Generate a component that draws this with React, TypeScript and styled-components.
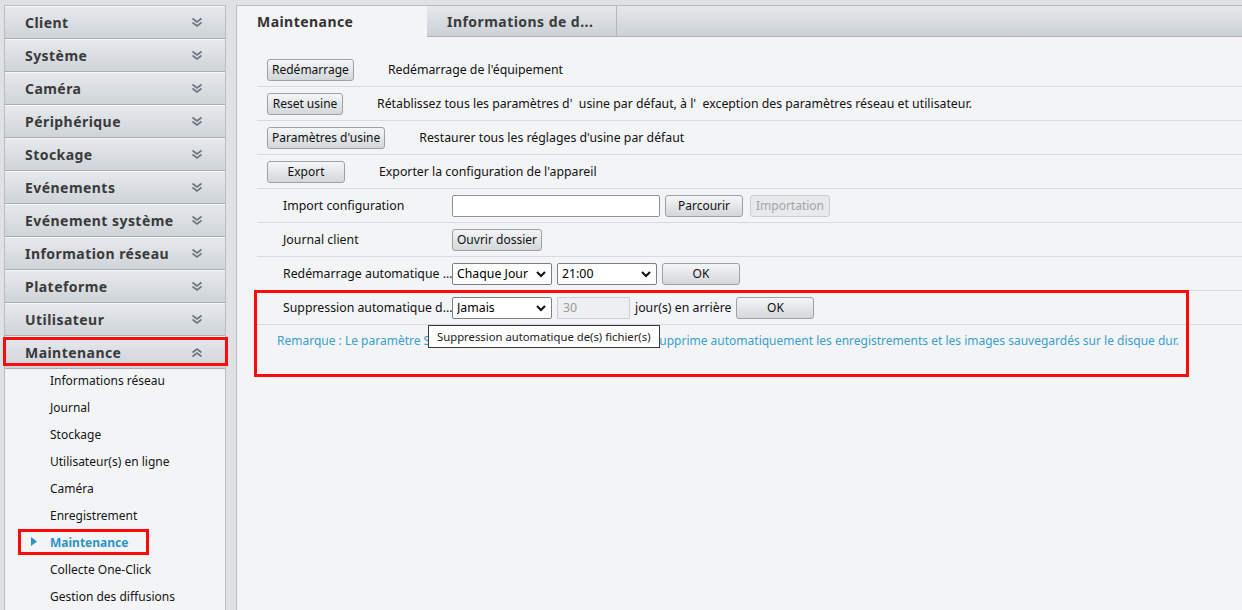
import React from "react";
import styled, { createGlobalStyle, css } from "styled-components";

const Global = createGlobalStyle`
  html, body { margin: 0; padding: 0; background: #dfe2e5; }
  body { font-family: "Noto Sans", "Open Sans", Arial, sans-serif; font-size: 12.3px; color: #111; }
  *, *::before, *::after { box-sizing: border-box; }
`;

const Page = styled.div`
  position: relative;
  display: flex;
  gap: 10px;
  padding: 5px 0 0 4px;
  height: 610px;
  overflow: hidden;
`;

const marked = css`
  &::after {
    content: "";
    position: absolute;
    border: 3px solid #ff0a0a;
    pointer-events: none;
  }
`;

const Sidebar = styled.nav`
  width: 222px;
  flex: none;
  background: #f3f4f6;
  border: 1px solid #b9bdc1;
  border-bottom: none;
  display: flex;
  flex-direction: column;
`;

const MenuHeader = styled.div<{ $marked?: boolean }>`
  position: relative;
  flex: none;
  height: 33px;
  display: flex;
  align-items: center;
  justify-content: space-between;
  padding: 0 22px 0 20px;
  background: linear-gradient(#e6e9ec, #cfd4d9);
  border-top: 1px solid #f7f8f9;
  border-bottom: 1px solid #a9aeb3;
  font-weight: 700;
  font-size: 14px;
  letter-spacing: 0.45px;
  color: #3a3a3a;
  ${(p) =>
    p.$marked &&
    css`
      ${marked}
      &::after {
        left: -2px;
        top: 0px;
        right: -3px;
        bottom: 2px;
      }
    `}
`;

const SubList = styled.div`
  display: flex;
  flex-direction: column;
  margin-top: -2px;
`;

const SubItem = styled.div<{ $active?: boolean }>`
  position: relative;
  flex: none;
  height: 27px;
  line-height: 27px;
  padding-left: 45px;
  font-size: 12px;
  color: #151515;
  ${(p) =>
    p.$active &&
    css`
      color: #2f93c8;
      font-weight: 700;
      ${marked}
      &::after {
        left: 13px;
        top: 0px;
        width: 131px;
        height: 26px;
      }
    `}
`;

const ActiveMark = styled.svg`
  position: absolute;
  left: 26px;
  top: 8px;
`;

const Main = styled.main`
  flex: 1;
  background: #f3f4f6;
  border-left: 1px solid #b9bdc1;
  border-top: 1px solid #b9bdc1;
  display: flex;
  flex-direction: column;
`;

const TabBar = styled.div`
  height: 31px;
  flex: none;
  display: flex;
  background: linear-gradient(#e5e8eb, #ccd1d7);
  border-bottom: 1px solid #aeb2b6;
`;

const Tab = styled.div<{ $active?: boolean }>`
  width: 190px;
  padding-left: 20px;
  display: flex;
  align-items: center;
  font-weight: 700;
  font-size: 14px;
  letter-spacing: 0.45px;
  color: #3c3c3c;
  border-right: 1px solid #b3b7bb;
  ${(p) =>
    p.$active &&
    css`
      background: #f3f4f6;
      margin-bottom: -1px;
      border-right: none;
      color: #333;
    `}
`;

const Content = styled.div`
  padding: 16px 0 0 20px;
  display: flex;
  flex-direction: column;
`;

const Row = styled.div<{ $last?: boolean }>`
  height: 34px;
  flex: none;
  display: flex;
  align-items: center;
  padding-left: 10px;
  border-bottom: ${(p) => (p.$last ? "none" : "1px solid #d8dadd")};
`;

const FormRow = styled(Row)`
  padding-left: 26px;
`;

const Label = styled.div`
  width: 169px;
  flex: none;
  white-space: nowrap;
`;

const Controls = styled.div`
  display: flex;
  align-items: center;
  gap: 5px;
`;

const Desc = styled.span`
  margin-left: 34px;
  white-space: nowrap;
`;

const Button = styled.button<{ $w?: number }>`
  height: 22px;
  min-width: 76px;
  padding: 0 4px;
  ${(p) => p.$w && `width: ${p.$w}px;`}
  font-family: inherit;
  font-size: 12px;
  white-space: nowrap;
  color: #111;
  background: linear-gradient(#f4f5f6, #d3d7db);
  border: 1px solid #9ca1a6;
  border-radius: 3px;
  cursor: pointer;
  &:disabled {
    color: #a2a4a6;
    background: #e7e9eb;
    border-color: #cacdd0;
  }
`;

const TextInput = styled.input<{ $w: number }>`
  width: ${(p) => p.$w}px;
  height: 22px;
  font-family: inherit;
  font-size: 12.3px;
  border: 1px solid #8d9195;
  border-radius: 2px;
  background: #fff;
  padding: 0 5px;
  &:disabled {
    background: #eeeff0;
    border-color: #cdd0d3;
    color: #9a9a9a;
  }
`;

const SelectWrap = styled.div`
  position: relative;
  width: 100px;
  height: 22px;
`;

const Select = styled.select`
  appearance: none;
  width: 100%;
  height: 100%;
  font-family: inherit;
  font-size: 12.3px;
  color: #000;
  background: #fff;
  border: 1px solid #7d8185;
  border-radius: 2px;
  padding: 0 18px 0 4px;
`;

const SelectArrow = styled.svg`
  position: absolute;
  right: 6px;
  top: 8px;
  pointer-events: none;
`;

const Unit = styled.span`
  white-space: nowrap;
`;

const MarkedGroup = styled.div`
  position: relative;
  ${marked}
  &::after {
    left: -3px;
    top: -1px;
    width: 935px;
    height: 87px;
  }
`;

const Remark = styled.div`
  height: 30px;
  display: flex;
  align-items: center;
  padding-left: 20px;
  color: #3aa0cf;
  font-size: 12px;
  white-space: nowrap;
`;

const Tooltip = styled.div`
  position: absolute;
  left: 171px;
  top: 34px;
  padding: 0 8px;
  height: 23px;
  line-height: 21px;
  background: #fff;
  border: 1px solid #3a3a3a;
  font-size: 11.3px;
  color: #222;
  white-space: nowrap;
  z-index: 2;
`;

const DoubleChevron = ({ up }: { up?: boolean }) => (
  <svg width="12" height="11" viewBox="0 0 12 11">
    <g
      fill="none"
      stroke="#6b7580"
      strokeWidth="1.6"
      transform={up ? "rotate(180 6 5.5)" : undefined}
    >
      <polyline points="1.5,1.5 6,5 10.5,1.5" />
      <polyline points="1.5,5.5 6,9 10.5,5.5" />
    </g>
  </svg>
);

const Arrow = () => (
  <SelectArrow width="10" height="7" viewBox="0 0 10 7">
    <polyline points="1,1 5,5 9,1" fill="none" stroke="#111" strokeWidth="2" />
  </SelectArrow>
);

const menus = [
  "Client",
  "Système",
  "Caméra",
  "Périphérique",
  "Stockage",
  "Evénements",
  "Evénement système",
  "Information réseau",
  "Plateforme",
  "Utilisateur",
];

const subItems = [
  "Informations réseau",
  "Journal",
  "Stockage",
  "Utilisateur(s) en ligne",
  "Caméra",
  "Enregistrement",
  "Maintenance",
  "Collecte One-Click",
  "Gestion des diffusions",
];

const Sel = ({ value, options }: { value: string; options: string[] }) => (
  <SelectWrap>
    <Select defaultValue={value}>
      {options.map((o) => (
        <option key={o}>{o}</option>
      ))}
    </Select>
    <Arrow />
  </SelectWrap>
);

export default function App() {
  return (
    <>
      <Global />
      <Page>
        <Sidebar>
          {menus.map((m) => (
            <MenuHeader key={m}>
              <span>{m}</span>
              <DoubleChevron />
            </MenuHeader>
          ))}
          <MenuHeader $marked>
            <span>Maintenance</span>
            <DoubleChevron up />
          </MenuHeader>
          <SubList>
            {subItems.map((s) => (
              <SubItem key={s} $active={s === "Maintenance"}>
                {s === "Maintenance" && (
                  <ActiveMark width="6" height="9" viewBox="0 0 6 9">
                    <polygon points="0,0 6,4.5 0,9" fill="#2f93c8" />
                  </ActiveMark>
                )}
                {s}
              </SubItem>
            ))}
          </SubList>
        </Sidebar>
        <Main>
          <TabBar>
            <Tab $active>Maintenance</Tab>
            <Tab>Informations de d...</Tab>
          </TabBar>
          <Content>
            <Row>
              <Button>Redémarrage</Button>
              <Desc>Redémarrage de l'équipement</Desc>
            </Row>
            <Row>
              <Button>Reset usine</Button>
              <Desc>
                Rétablissez tous les paramètres d'&nbsp; usine par défaut, à l'&nbsp; exception des
                paramètres réseau et utilisateur.
              </Desc>
            </Row>
            <Row>
              <Button>Paramètres d'usine</Button>
              <Desc>Restaurer tous les réglages d'usine par défaut</Desc>
            </Row>
            <Row>
              <Button $w={78}>Export</Button>
              <Desc>Exporter la configuration de l'appareil</Desc>
            </Row>
            <FormRow>
              <Label>Import configuration</Label>
              <Controls>
                <TextInput $w={208} />
                <Button $w={78}>Parcourir</Button>
                <Button $w={80} disabled style={{ marginLeft: 2 }}>
                  Importation
                </Button>
              </Controls>
            </FormRow>
            <FormRow>
              <Label>Journal client</Label>
              <Controls>
                <Button>Ouvrir dossier</Button>
              </Controls>
            </FormRow>
            <FormRow>
              <Label>Redémarrage automatique ...</Label>
              <Controls>
                <Sel value="Chaque Jour" options={["Chaque Jour", "Chaque Semaine", "Jamais"]} />
                <Sel value="21:00" options={["20:00", "21:00", "22:00"]} />
                <Button $w={78}>OK</Button>
              </Controls>
            </FormRow>
            <MarkedGroup>
              <FormRow>
                <Label>Suppression automatique d...</Label>
                <Controls>
                  <Sel value="Jamais" options={["Jamais", "Personnaliser"]} />
                  <TextInput $w={73} disabled defaultValue="30" />
                  <Unit>jour(s) en arrière</Unit>
                  <Button $w={78}>OK</Button>
                </Controls>
              </FormRow>
              <Remark>
                Remarque : Le paramètre Suppression automatique de(s) fichier(s) supprime
                automatiquement les enregistrements et les images sauvegardés sur le disque dur.
              </Remark>
              <Tooltip>Suppression automatique de(s) fichier(s)</Tooltip>
            </MarkedGroup>
          </Content>
        </Main>
      </Page>
    </>
  );
}
